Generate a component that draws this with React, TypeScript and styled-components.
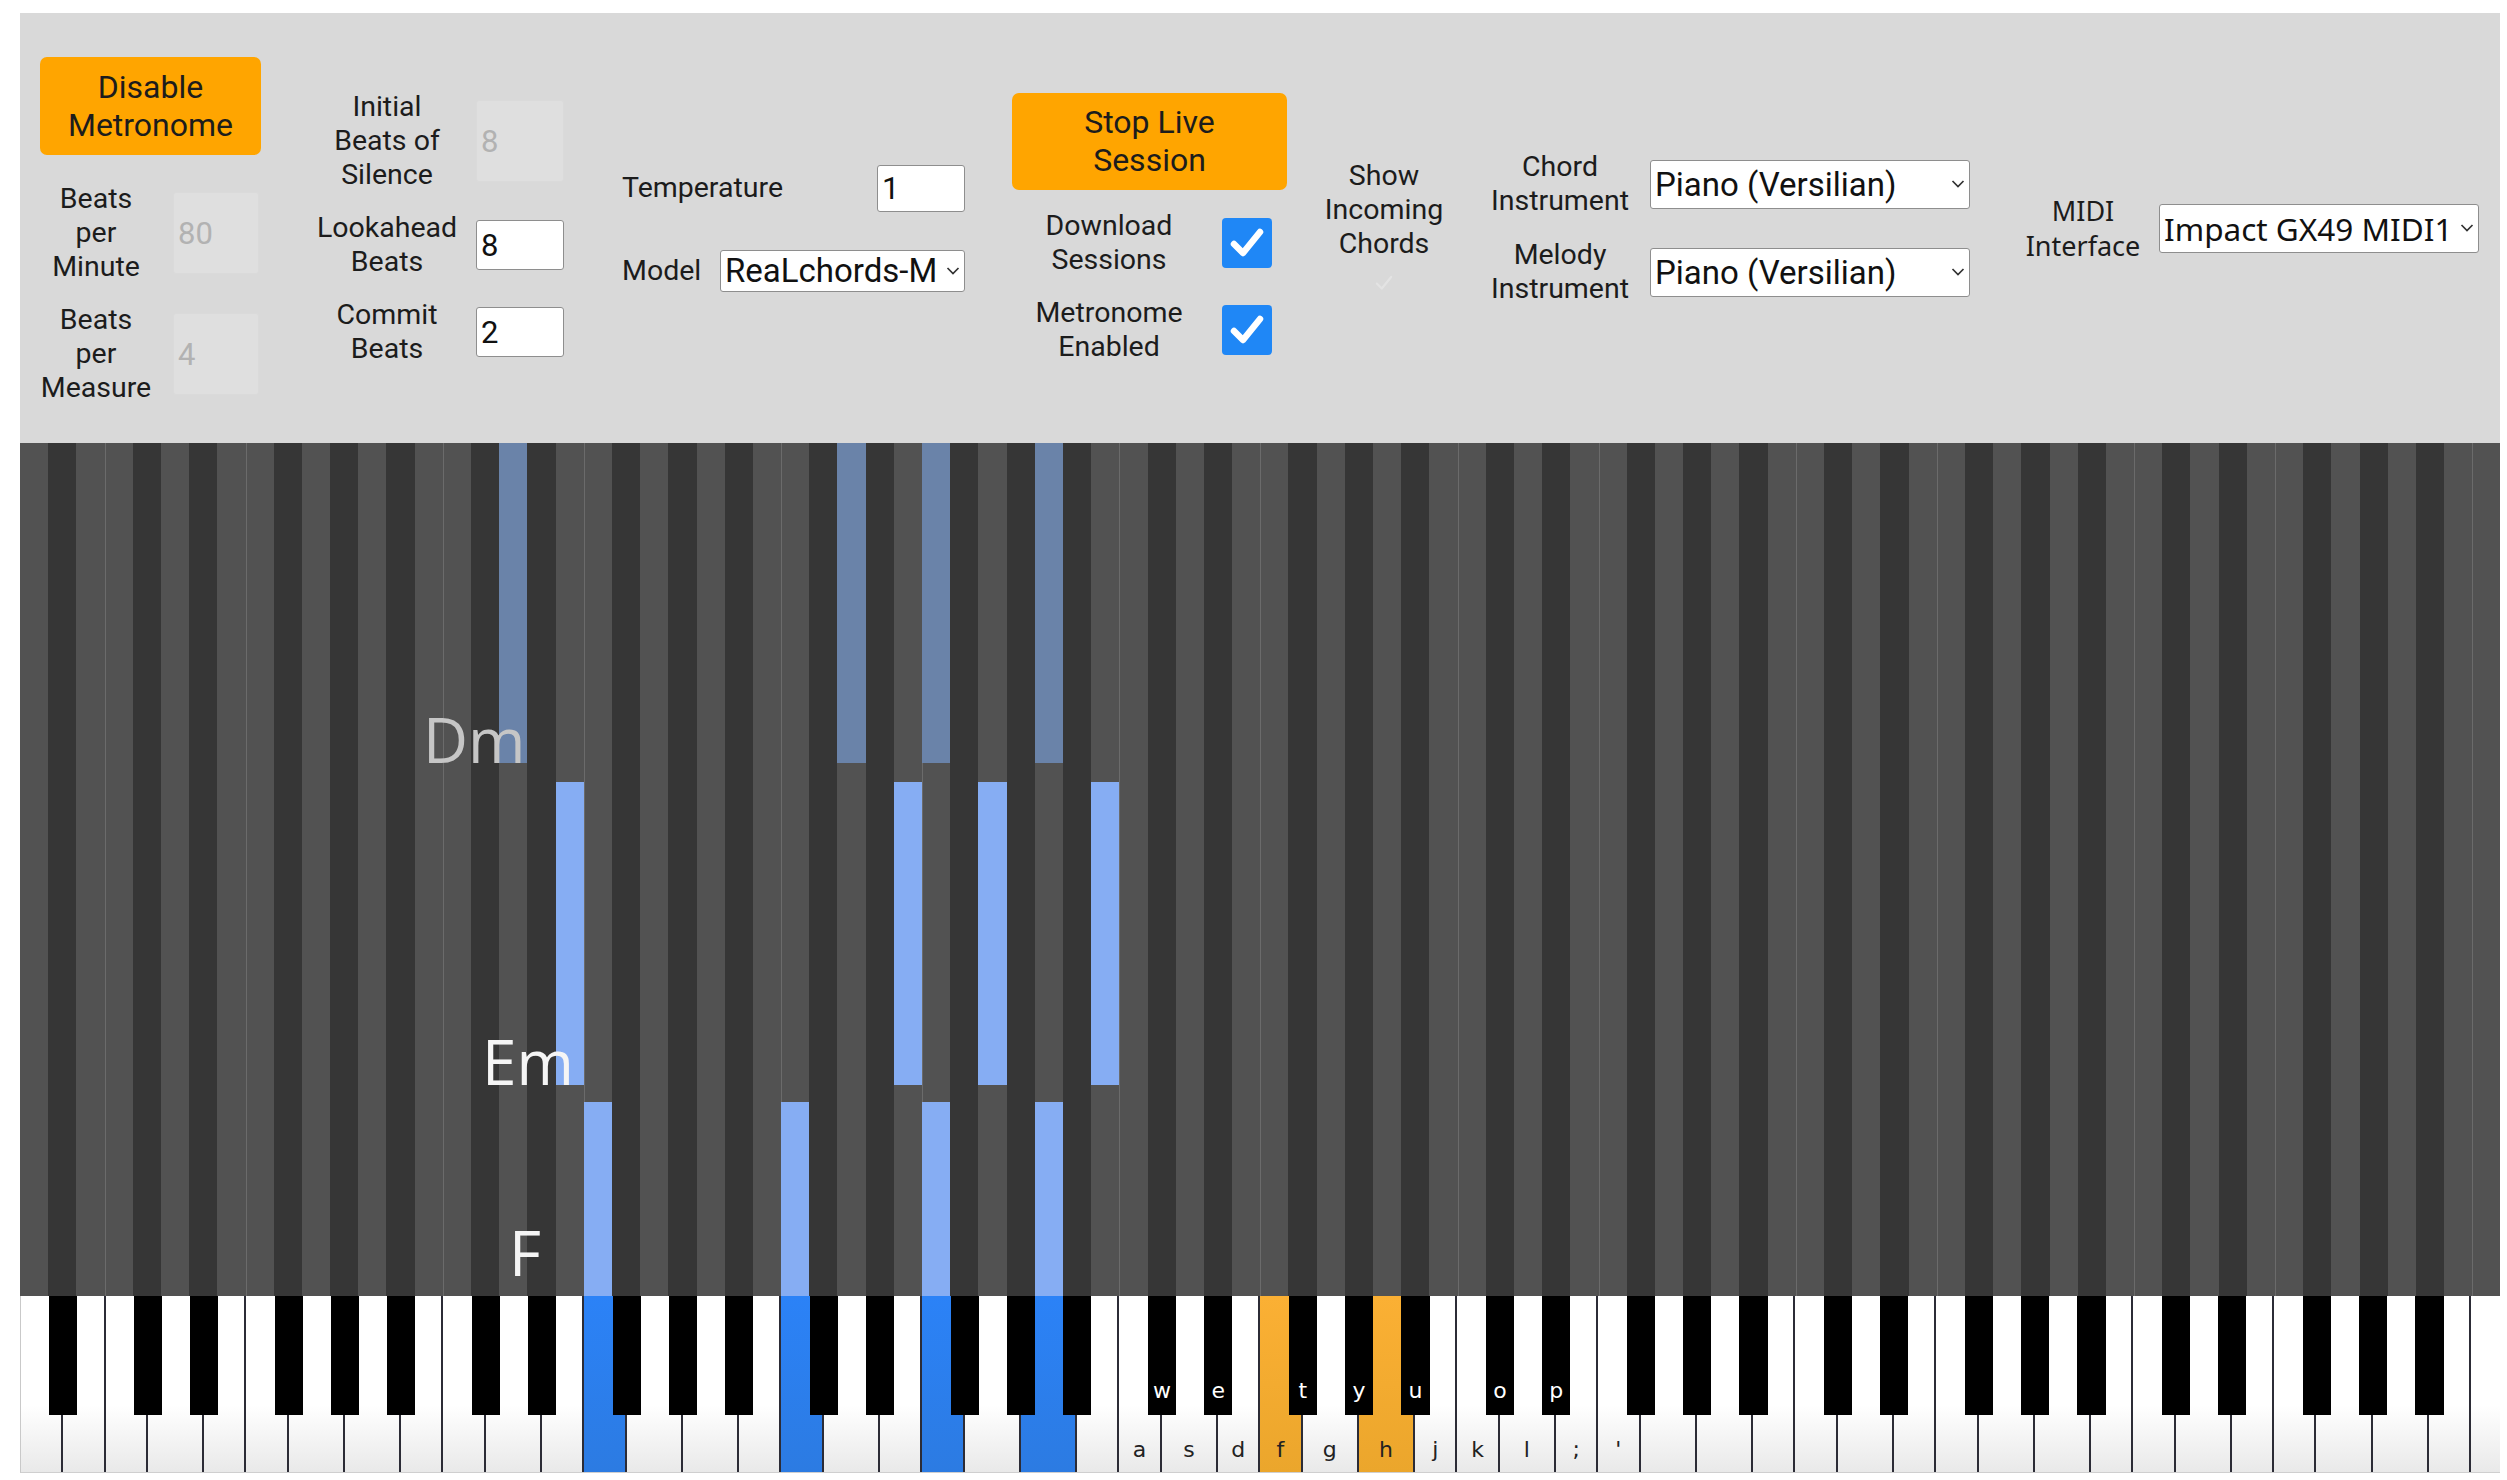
import React from "react";
import styled, { createGlobalStyle } from "styled-components";

const KEY_COUNT = 88;
const LOWEST = 21; // A0
const UNIT = 100 / KEY_COUNT;

const isBlack = (midi: number) => [1, 3, 6, 8, 10].includes(midi % 12);

// white keys are 1.5 or 2 semitone lanes wide, the ends are trimmed
function whiteUnits(midi: number): number {
    if (midi === LOWEST) return 1.5;
    if (midi === LOWEST + KEY_COUNT - 1) return 1;
    const pc = midi % 12;
    return pc === 2 || pc === 7 || pc === 9 ? 2 : 1.5;
}

type Note = { midi: number, start: number, end: number, faded?: boolean };

const chord = (midis: number[], start: number, end: number, faded = false): Note[] =>
    midis.map(midi => ({ midi, start, end, faded }));

const NOTES: Note[] = [
    ...chord([38, 50, 53, 57], 0, 320, true),
    ...chord([40, 52, 55, 59], 339, 642),
    ...chord([41, 48, 53, 57], 659, 853),
];

const CHORDS = [
    { name: "Dm", x: 403, baseline: 320, faded: true },
    { name: "Em", x: 462, baseline: 642, faded: false },
    { name: "F", x: 489, baseline: 833, faded: false },
];

const PRESSED: Record<number, "blue" | "orange"> = {
    41: "blue", 48: "blue", 53: "blue", 57: "blue",
    65: "orange", 69: "orange",
};

const LETTERS: Record<number, string> = {
    60: "a", 61: "w", 62: "s", 63: "e", 64: "d", 65: "f", 66: "t", 67: "g",
    68: "y", 69: "h", 70: "u", 71: "j", 72: "k", 73: "o", 74: "l", 75: "p",
    76: ";", 77: "'",
};

const GlobalStyle = createGlobalStyle`
html, body {
    margin: 0;
    padding: 0;
    background: #fff;
}
body {
    font-family: Roboto, "Noto Sans", sans-serif;
}
`;

const Page = styled.div`
width: 2507px;
height: 1480px;
padding: 13px 7px 0 20px;
box-sizing: border-box;
overflow: hidden;
`;

/* ---------- control panel ---------- */

const Panel = styled.div`
height: 430px;
background: #d9d9d9;
display: flex;
align-items: center;
padding-left: 20px;
box-sizing: border-box;
color: #1c1c1c;
`;

const Column = styled.div<{ $w: number, $ml?: number, $gap?: number, $shift?: number }>`
display: flex;
flex-direction: column;
flex: none;
width: ${p => p.$w}px;
margin-left: ${p => p.$ml ?? 0}px;
margin-top: ${p => p.$shift ?? 0}px;
gap: ${p => p.$gap ?? 19}px;
`;

const Row = styled.div<{ $gap?: number, $spread?: boolean }>`
display: flex;
align-items: center;
gap: ${p => p.$gap ?? 0}px;
justify-content: ${p => p.$spread ? "space-between" : "flex-start"};
`;

const Label = styled.div<{ $w?: number, $font?: string, $size?: number, $lh?: number, $left?: boolean }>`
flex: none;
width: ${p => p.$w ? `${p.$w}px` : "auto"};
text-align: ${p => p.$left ? "left" : "center"};
font-family: ${p => p.$font ?? "Roboto"}, sans-serif;
font-size: ${p => p.$size ?? 28.5}px;
line-height: ${p => p.$lh ?? 34}px;
white-space: nowrap;
`;

const OrangeButton = styled.button<{ $w: number, $h: number, $mb?: number }>`
flex: none;
width: ${p => p.$w}px;
height: ${p => p.$h}px;
margin-bottom: ${p => p.$mb ?? 0}px;
padding: 0;
border: none;
border-radius: 7px;
background: #ffa500;
color: #1c1c1c;
font-family: Roboto, sans-serif;
font-size: 32px;
line-height: 38px;
`;

const NumberInput = styled.input<{ $w: number, $h: number }>`
flex: none;
width: ${p => p.$w}px;
height: ${p => p.$h}px;
box-sizing: border-box;
padding: 0 4px;
margin: 0;
border: 1.5px solid #8e8e8e;
border-radius: 3px;
background: #fff;
color: #111;
font-family: Roboto, sans-serif;
font-size: 31px;
&:disabled {
    background: #dfdfdf;
    border-color: #dadada;
    color: #b2b2b2;
}
`;

const SelectWrap = styled.div<{ $w: number, $h: number }>`
position: relative;
flex: none;
width: ${p => p.$w}px;
height: ${p => p.$h}px;
`;

const Select = styled.select<{ $font?: string, $size?: number }>`
appearance: none;
width: 100%;
height: 100%;
box-sizing: border-box;
margin: 0;
padding: 0 24px 0 4px;
border: 1.5px solid #8e8e8e;
border-radius: 3px;
background: #fff;
color: #111;
font-family: ${p => p.$font ?? "Roboto"}, sans-serif;
font-size: ${p => p.$size ?? 33}px;
`;

const Chevron = styled.svg`
position: absolute;
right: 5px;
top: 50%;
transform: translateY(-50%);
pointer-events: none;
`;

const CheckBox = styled.div<{ $ghost?: boolean, $size?: number }>`
flex: none;
width: ${p => p.$size ?? 50}px;
height: ${p => p.$size ?? 50}px;
border-radius: 4px;
background: ${p => p.$ghost ? "transparent" : "#1f87f6"};
display: flex;
align-items: center;
justify-content: center;
align-self: ${p => p.$ghost ? "center" : "auto"};
`;

/* ---------- piano roll ---------- */

const Roll = styled.div`
position: relative;
height: 853px;
display: flex;
background: #525252;
overflow: hidden;
`;

const Lane = styled.div<{ $black: boolean, $edge: boolean }>`
position: relative;
flex: 1 1 0;
background: ${p => p.$black ? "#363636" : "#525252"};
box-shadow: ${p => p.$edge ? "inset 1px 0 0 #6b6b6b" : "none"};
`;

const NoteBar = styled.div<{ $start: number, $end: number, $faded?: boolean }>`
position: absolute;
left: 0;
right: 0;
top: ${p => p.$start}px;
height: ${p => p.$end - p.$start}px;
background: ${p => p.$faded ? "#6a83a9" : "#86adf3"};
`;

const ChordName = styled.div<{ $x: number, $top: number, $faded?: boolean }>`
position: absolute;
left: ${p => p.$x}px;
top: ${p => p.$top}px;
font-family: "Open Sans", "Noto Sans", sans-serif;
font-size: 62px;
line-height: 62px;
color: ${p => p.$faded ? "#c6c6c6" : "#f5f5f5"};
white-space: nowrap;
`;

/* ---------- keyboard ---------- */

const Keyboard = styled.div`
position: relative;
height: 177px;
display: flex;
box-sizing: border-box;
border-bottom: 1px solid #cfcfcf;
border-left: 1px solid #c9c9c9;
`;

const KEY_FILL = {
    white: "linear-gradient(#ffffff 62%, #e9e9e9)",
    blue: "linear-gradient(#2b82f7, #2c7be2)",
    orange: "linear-gradient(#fbb034, #eba62c)",
};

const WhiteKey = styled.div<{ $units: number, $fill: keyof typeof KEY_FILL, $last?: boolean }>`
flex: 0 0 ${p => p.$units * UNIT}%;
box-sizing: border-box;
border-right: ${p => p.$last ? "none" : "2px solid #2c2c36"};
background: ${p => KEY_FILL[p.$fill]};
display: flex;
flex-direction: column;
justify-content: flex-end;
align-items: center;
padding-bottom: 11px;
`;

const BlackKey = styled.div<{ $col: number }>`
position: absolute;
top: 0;
left: ${p => p.$col * UNIT}%;
width: ${UNIT}%;
height: 119px;
background: #000;
display: flex;
justify-content: center;
align-items: flex-end;
padding-bottom: 13px;
box-sizing: border-box;
`;

const KeyLetter = styled.span<{ $light?: boolean }>`
font-family: "DejaVu Sans", sans-serif;
font-size: 22px;
line-height: 22px;
color: ${p => p.$light ? "#fff" : "#222"};
`;

/* ---------- parts ---------- */

const SelectBox = ({ w, h, value, font, size }: { w: number, h: number, value: string, font?: string, size?: number }) => (
    <SelectWrap $w={w} $h={h}>
        <Select $font={font} $size={size} defaultValue={value}>
            <option>{value}</option>
        </Select>
        <Chevron width="14" height="9" viewBox="0 0 14 9">
            <polyline points="1.5,1.5 7,7 12.5,1.5" fill="none" stroke="#333" strokeWidth="1.7" />
        </Chevron>
    </SelectWrap>
);

const Tick = ({ ghost }: { ghost?: boolean }) => (
    <CheckBox $ghost={ghost} $size={ghost ? 30 : 50}>
        <svg width={ghost ? 22 : 40} height={ghost ? 22 : 40} viewBox="0 0 40 40">
            <path d="M7 21 L16 30 L33 9" fill="none"
                stroke={ghost ? "rgba(255,255,255,0.28)" : "#fff"}
                strokeWidth={ghost ? 4 : 6.5} strokeLinecap="round" strokeLinejoin="round" />
        </svg>
    </CheckBox>
);

const ControlPanel = () => (
    <Panel>
        <Column $w={221} $shift={6}>
            <OrangeButton $w={221} $h={98} $mb={8}>Disable<br />Metronome</OrangeButton>
            <Row $gap={21}>
                <Label $w={112}>Beats<br />per<br />Minute</Label>
                <NumberInput $w={86} $h={82} disabled defaultValue="80" />
            </Row>
            <Row $gap={21}>
                <Label $w={112}>Beats<br />per<br />Measure</Label>
                <NumberInput $w={86} $h={82} disabled defaultValue="4" />
            </Row>
        </Column>

        <Column $w={254} $ml={49}>
            <Row $gap={12}>
                <Label $w={154}>Initial<br />Beats of<br />Silence</Label>
                <NumberInput $w={88} $h={82} disabled defaultValue="8" />
            </Row>
            <Row $gap={12}>
                <Label $w={154}>Lookahead<br />Beats</Label>
                <NumberInput $w={88} $h={50} defaultValue="8" />
            </Row>
            <Row $gap={12}>
                <Label $w={154}>Commit<br />Beats</Label>
                <NumberInput $w={88} $h={50} defaultValue="2" />
            </Row>
        </Column>

        <Column $w={343} $ml={58} $gap={38}>
            <Row $spread>
                <Label $left>Temperature</Label>
                <NumberInput $w={88} $h={47} defaultValue="1" />
            </Row>
            <Row $spread>
                <Label $left>Model</Label>
                <SelectBox w={245} h={42} value="ReaLchords-M" />
            </Row>
        </Column>

        <Column $w={275} $ml={47}>
            <OrangeButton $w={275} $h={97}>Stop Live<br />Session</OrangeButton>
            <Row $gap={16}>
                <Label $w={194}>Download<br />Sessions</Label>
                <Tick />
            </Row>
            <Row $gap={16}>
                <Label $w={194}>Metronome<br />Enabled</Label>
                <Tick />
            </Row>
        </Column>

        <Column $w={128} $ml={33} $gap={7}>
            <Label $w={128}>Show<br />Incoming<br />Chords</Label>
            <Tick ghost />
        </Column>

        <Column $w={480} $ml={42} $gap={20}>
            <Row $gap={20}>
                <Label $w={140}>Chord<br />Instrument</Label>
                <SelectBox w={320} h={49} value="Piano (Versilian)" />
            </Row>
            <Row $gap={20}>
                <Label $w={140}>Melody<br />Instrument</Label>
                <SelectBox w={320} h={49} value="Piano (Versilian)" />
            </Row>
        </Column>

        <Column $w={459} $ml={50}>
            <Row $gap={13}>
                <Label $w={126} $font='"Noto Sans"' $size={27} $lh={35}>MIDI<br />Interface</Label>
                <SelectBox w={320} h={49} value="Impact GX49 MIDI1" font='"Noto Sans"' size={31.5} />
            </Row>
        </Column>
    </Panel>
);

const PianoRoll = () => {
    const lanes = Array.from({ length: KEY_COUNT }, (_, i) => LOWEST + i);
    return <Roll>
        {lanes.map((midi, i) => {
            const pc = midi % 12;
            return <Lane key={midi} $black={isBlack(midi)} $edge={i > 0 && (pc === 0 || pc === 5)}>
                {NOTES.filter(n => n.midi === midi).map((n, k) =>
                    <NoteBar key={k} $start={n.start} $end={n.end} $faded={n.faded} />
                )}
            </Lane>;
        })}
        {CHORDS.map(c =>
            <ChordName key={c.name} $x={c.x} $top={c.baseline - 55} $faded={c.faded}>{c.name}</ChordName>
        )}
    </Roll>;
};

const PianoKeys = () => {
    const keys = Array.from({ length: KEY_COUNT }, (_, i) => LOWEST + i);
    const last = LOWEST + KEY_COUNT - 1;
    return <Keyboard>
        {keys.filter(m => !isBlack(m)).map(m =>
            <WhiteKey key={m} $units={whiteUnits(m)} $fill={PRESSED[m] ?? "white"} $last={m === last}>
                {LETTERS[m] && <KeyLetter>{LETTERS[m]}</KeyLetter>}
            </WhiteKey>
        )}
        {keys.map((m, i) => isBlack(m) &&
            <BlackKey key={m} $col={i}>
                {LETTERS[m] && <KeyLetter $light>{LETTERS[m]}</KeyLetter>}
            </BlackKey>
        )}
    </Keyboard>;
};

export default function App() {
    return <>
        <GlobalStyle />
        <Page>
            <ControlPanel />
            <PianoRoll />
            <PianoKeys />
        </Page>
    </>;
}
